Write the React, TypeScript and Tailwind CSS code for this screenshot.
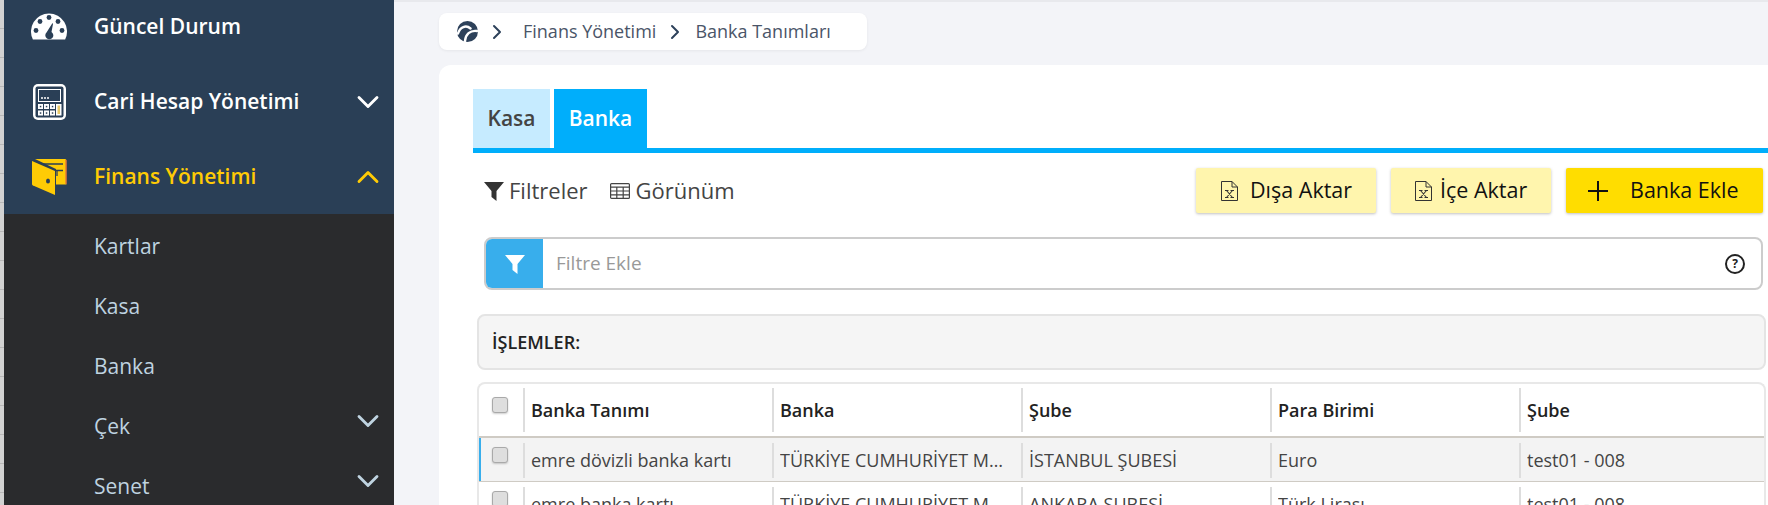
import { ChevronDown, ChevronRight, ChevronUp } from 'lucide-react'

function GaugeIcon() {
  return (
    <svg width="36" height="27" viewBox="0 0 36 27" className="mt-[-1px]">
      <path d="M1.9 26.5 A18 18 0 1 1 34.1 26.5 Z" fill="#fff" />
      <g fill="#2a3f56">
        <circle cx="18" cy="4.5" r="2.4" />
        <circle cx="9" cy="8.5" r="2.4" />
        <circle cx="27" cy="8.5" r="2.4" />
        <circle cx="5" cy="17.5" r="2.4" />
        <circle cx="31" cy="17.5" r="2.4" />
        <path d="M21.5 10 L22 11 L20.5 19 A4 4 0 1 1 15.5 19.5 Z" />
      </g>
    </svg>
  )
}

function CalculatorIcon() {
  return (
    <svg width="33" height="36" viewBox="0 0 33 36">
      <rect width="33" height="36" rx="5" fill="#fff" />
      <rect x="2.5" y="2.5" width="28" height="31" rx="2" fill="#2a3f56" />
      <rect x="5.5" y="5.5" width="22" height="12" fill="#2a3f56" stroke="#fff" />
      <path d="M8 14h2M11 14h2M14 14h2" stroke="#fff" strokeWidth="1.5" />
      <g fill="#fff">
        <rect x="5" y="20" width="5" height="5" />
        <rect x="11" y="20" width="5" height="5" />
        <rect x="17" y="20" width="5" height="5" />
        <rect x="5" y="26.5" width="5" height="5" />
        <rect x="11" y="26.5" width="5" height="5" />
        <rect x="17" y="26.5" width="5" height="5" />
        <rect x="23" y="20" width="5.5" height="11.5" />
      </g>
      <g fill="#2a3f56">
        <rect x="6.8" y="21.8" width="1.5" height="1.5" />
        <rect x="12.8" y="21.8" width="1.5" height="1.5" />
        <rect x="18.8" y="21.8" width="1.5" height="1.5" />
        <rect x="6.8" y="28.3" width="1.5" height="1.5" />
        <rect x="12.8" y="28.3" width="1.5" height="1.5" />
        <rect x="18.8" y="28.3" width="1.5" height="1.5" />
      </g>
      <rect x="24.5" y="21.5" width="2.5" height="8.5" fill="#e8c96a" />
    </svg>
  )
}

function WalletIcon() {
  return (
    <svg width="35" height="36" viewBox="0 0 35 36">
      <path d="M3 0 H33 A1.5 1.5 0 0 1 34.5 1.5 V25.5 H24 V10 Z" fill="#ffcb05" />
      <path d="M34 1 V25" stroke="#d9534f" strokeWidth="1" />
      <path d="M11 5 H31 M22 11.5 H31 M25 11.5 V17" stroke="#2a3f56" strokeWidth="1.3" fill="none" />
      <path d="M0 2 L23 12 V36 L1 26.5 Q0 26 0 25 Z" fill="#ffcb05" />
      <ellipse cx="16" cy="22" rx="2" ry="2.6" fill="#2a3f56" />
    </svg>
  )
}

function BrandIcon() {
  return (
    <svg width="21" height="21" viewBox="0 0 21 21" fill="none" stroke="#fff" strokeLinecap="round">
      <circle cx="10.5" cy="10.5" r="10.5" fill="#2d415a" stroke="none" />
      <path d="M1 12.5 C3 6 9 3.5 13.5 7.5" strokeWidth="2.4" />
      <path d="M8 20 C8.5 13.5 13 9 20 10" strokeWidth="2.4" />
    </svg>
  )
}

function FileXIcon() {
  return (
    <svg width="17" height="20" viewBox="0 0 17 20" fill="none" stroke="#333" strokeWidth="1">
      <path d="M0.5 0.5 H11 L16.5 6 V19.5 H0.5 Z" />
      <path d="M11 0.5 V6 H16.5" />
      <path d="M5.5 9.5 L11.5 16.5 M11.5 9.5 L5.5 16.5 M4 9.5 H7.5 M9.5 9.5 H13 M4 16.5 H7.5 M9.5 16.5 H13" strokeWidth="1.1" />
    </svg>
  )
}

function FunnelIcon({ className }: { className?: string }) {
  return (
    <svg viewBox="0 0 20 20" className={className} fill="currentColor">
      <path d="M0 1 H20 L12.5 10 V20 L7.5 16 V10 Z" />
    </svg>
  )
}

function TableIcon() {
  return (
    <svg width="20" height="16" viewBox="0 0 20 16" fill="none" stroke="#444" strokeWidth="1.2">
      <rect x="0.6" y="0.6" width="18.8" height="14.8" rx="1" />
      <path d="M0.6 4.2 H19.4 M0.6 8 H19.4 M0.6 11.8 H19.4 M6.8 4.2 V15.4 M13.2 4.2 V15.4" />
    </svg>
  )
}

function MainItem({ icon, label, open, active }: { icon: React.ReactNode; label: string; open?: boolean; active?: boolean }) {
  return (
    <div className={`flex h-[75px] items-center ${active ? 'text-[#ffcb05]' : 'text-white'}`}>
      <div className="flex w-[90px] justify-center">{icon}</div>
      <span className="flex-1 text-[21px] font-semibold">{label}</span>
      {open === true && <ChevronUp className="mr-[8px] h-[36px] w-[36px]" strokeWidth={1.9} />}
      {open === false && <ChevronDown className="mr-[8px] h-[36px] w-[36px]" strokeWidth={1.9} />}
    </div>
  )
}

function SubItem({ label, arrow }: { label: string; arrow?: boolean }) {
  return (
    <div className="flex h-[60px] items-center pl-[90px] text-[21px] text-[#bfd3e0]">
      <span className="flex-1">{label}</span>
      {arrow && <ChevronDown className="mr-[8px] mt-[-12px] h-[36px] w-[36px]" strokeWidth={1.9} />}
    </div>
  )
}

function Checkbox() {
  return <div className="h-[16px] w-[16px] rounded-[3px] border border-[#a9a9a9] bg-[#dedede] shadow-[0_1px_2px_rgba(0,0,0,0.2)]" />
}

const gridCols = 'grid grid-cols-[44px_249px_249px_249px_249px_1fr]'

function HeaderCell({ label }: { label: string }) {
  return (
    <div className="flex h-[44px] items-center border-l-2 border-[#dddddd] pl-[6px] text-[18px] font-semibold text-[#222]">
      {label}
    </div>
  )
}

function RowCell({ label }: { label: string }) {
  return (
    <div className="mt-[2px] flex h-[35px] min-w-0 items-center border-l-2 border-[#dddddd] pl-[6px] pr-[17px] text-[18px] text-[#444]">
      <span className="truncate">{label}</span>
    </div>
  )
}

function TableRow({ cells, selected }: { cells: string[]; selected?: boolean }) {
  return (
    <div
      className={`${gridCols} h-[44px] items-center border-b border-[#cfcbc4] ${
        selected ? 'bg-[#f3f3f3] shadow-[inset_2px_0_0_#38aeec]' : 'bg-white'
      }`}
    >
      <div className="mt-[-10px] flex justify-center pr-[3px]">
        <Checkbox />
      </div>
      {cells.map((cell, i) => (
        <RowCell key={i} label={cell} />
      ))}
    </div>
  )
}

export default function App() {
  return (
    <div className="flex h-[505px] w-full overflow-hidden bg-[#f3f4f8] font-['Open_Sans',sans-serif]">
      <div className="w-[4px] shrink-0 bg-[repeating-linear-gradient(to_bottom,#d2d2d2_0,#d2d2d2_28px,#b8b8b8_28px,#b8b8b8_29px)]" />

      <aside className="w-[390px] shrink-0 bg-[#2a2b2d]">
        <div className="mt-[-11px] h-[225px] bg-[#2a3f56]">
          <MainItem icon={<GaugeIcon />} label="Güncel Durum" />
          <MainItem icon={<CalculatorIcon />} label="Cari Hesap Yönetimi" open={false} />
          <MainItem icon={<WalletIcon />} label="Finans Yönetimi" open={true} active />
        </div>
        <div className="pt-[3px]">
          <SubItem label="Kartlar" />
          <SubItem label="Kasa" />
          <SubItem label="Banka" />
          <SubItem label="Çek" arrow />
          <SubItem label="Senet" arrow />
        </div>
      </aside>

      <main className="min-w-0 flex-1">
        <div className="h-[2px] bg-[#e8e9ed]" />
        <div className="ml-[45px] mt-[11px] flex h-[37px] w-[428px] items-center rounded-lg bg-white pl-[18px] text-[18px] text-[#4a5568] shadow-[0_1px_3px_rgba(0,0,0,0.06)]">
          <BrandIcon />
          <ChevronRight className="ml-[7px] h-[24px] w-[24px] text-[#2d415a]" strokeWidth={2} />
          <span className="ml-[14px]">Finans Yönetimi</span>
          <ChevronRight className="ml-[7px] h-[24px] w-[24px] text-[#2d415a]" strokeWidth={2} />
          <span className="ml-[8px]">Banka Tanımları</span>
        </div>

        <div className="ml-[45px] mt-[15px] h-[440px] rounded-tl-xl bg-white pl-[34px] pt-[24px]">
          <div className="flex h-[64px] gap-[4px] border-b-[5px] border-[#00aefb] text-[21px] font-semibold">
            <div className="flex w-[77px] items-center justify-center bg-[#c6ebff] text-[#444]">Kasa</div>
            <div className="flex w-[93px] items-center justify-center bg-[#00aefb] text-white">Banka</div>
          </div>

          <div className="mr-[5px] mt-[15px] flex h-[45px] items-center justify-between pl-[11px]">
            <div className="flex items-center text-[22px] text-[#444]">
              <FunnelIcon className="h-[20px] w-[20px] text-[#333]" />
              <span className="ml-[5px]">Filtreler</span>
              <div className="ml-[22px]">
                <TableIcon />
              </div>
              <span className="ml-[6px]">Görünüm</span>
            </div>
            <div className="flex gap-[15px] text-[21.5px] text-[#111]">
              <button className="flex h-[45px] w-[180px] items-center rounded-[2px] bg-[#fff5ad] pl-[25px] shadow-[0_1px_3px_rgba(0,0,0,0.25)]">
                <FileXIcon />
                <span className="ml-[12px]">Dışa Aktar</span>
              </button>
              <button className="flex h-[45px] w-[160px] items-center rounded-[2px] bg-[#fff5ad] pl-[24px] shadow-[0_1px_3px_rgba(0,0,0,0.25)]">
                <FileXIcon />
                <span className="ml-[8px]">İçe Aktar</span>
              </button>
              <button className="flex h-[45px] w-[197px] items-center rounded-[2px] bg-[#ffdd00] pl-[22px] shadow-[0_1px_3px_rgba(0,0,0,0.25)]">
                <svg width="20" height="20" viewBox="0 0 20 20" stroke="#111" strokeWidth="2">
                  <path d="M10 0 V20 M0 10 H20" />
                </svg>
                <span className="ml-[22px]">Banka Ekle</span>
              </button>
            </div>
          </div>

          <div className="ml-[11px] mr-[5px] mt-[24px] flex h-[53px] items-center overflow-hidden rounded-lg border-2 border-[#cccccc] bg-white">
            <div className="flex h-full w-[57px] items-center justify-center bg-[#38aeec] text-white">
              <FunnelIcon className="h-[20px] w-[22px]" />
            </div>
            <span className="ml-[13px] flex-1 text-[19px] text-[#999]">Filtre Ekle</span>
            <div className="mr-[16px] flex h-[20px] w-[20px] items-center justify-center rounded-full border-2 border-[#222] text-[12px] font-bold text-[#222]">
              ?
            </div>
          </div>

          <div className="ml-[4px] mr-[2px] mt-[24px] flex h-[56px] items-center rounded-lg border-2 border-[#e4e4e4] bg-[#f5f5f5] pl-[13px] text-[18px] font-semibold text-[#222]">
            İŞLEMLER:
          </div>

          <div className="ml-[4px] mr-[2px] mt-[12px] rounded-t-lg border-x-2 border-t-2 border-[#e8e8e8]">
            <div className={`${gridCols} h-[54px] items-center border-b-2 border-[#cfcbc4]`}>
              <div className="mt-[-10px] flex justify-center pr-[3px]">
                <Checkbox />
              </div>
              <HeaderCell label="Banka Tanımı" />
              <HeaderCell label="Banka" />
              <HeaderCell label="Şube" />
              <HeaderCell label="Para Birimi" />
              <HeaderCell label="Şube" />
            </div>
            <TableRow
              selected
              cells={['emre dövizli banka kartı', 'TÜRKİYE CUMHURİYET MERKEZ BANKASI', 'İSTANBUL ŞUBESİ', 'Euro', 'test01 - 008']}
            />
            <TableRow
              cells={['emre banka kartı', 'TÜRKİYE CUMHURİYET MERKEZ BANKASI', 'ANKARA ŞUBESİ', 'Türk Lirası', 'test01 - 008']}
            />
          </div>
        </div>
      </main>
    </div>
  )
}
